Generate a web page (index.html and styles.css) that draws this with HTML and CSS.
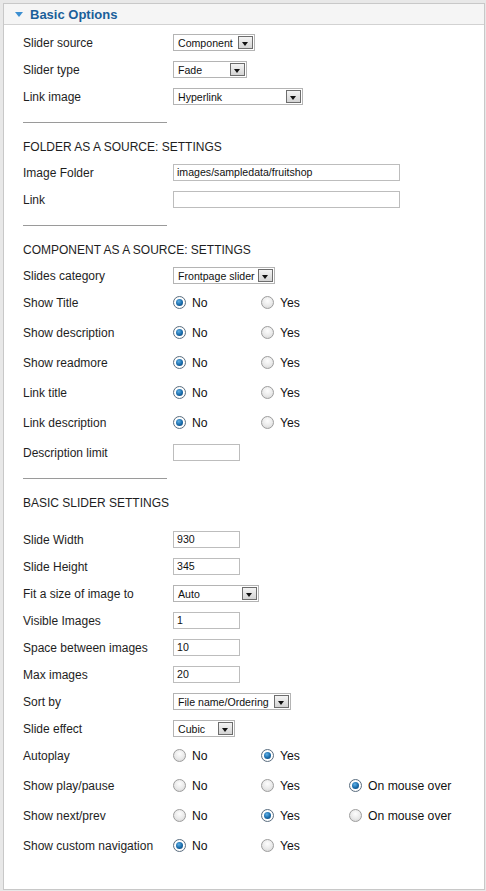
FILE: index.html
```html
<!DOCTYPE html>
<html>
<head>
<meta charset="utf-8">
<link rel="stylesheet" href="styles.css">
</head>
<body>
<div class="panel">
  <div class="panel-head"><span class="tri"></span><span class="title">Basic Options</span></div>
  <div class="panel-body">
    <div class="row"><span class="lbl">Slider source</span><div class="select w82"><span class="val">Component</span><span class="btn"></span></div></div>
    <div class="row"><span class="lbl">Slider type</span><div class="select w74"><span class="val">Fade</span><span class="btn"></span></div></div>
    <div class="row"><span class="lbl">Link image</span><div class="select w130"><span class="val">Hyperlink</span><span class="btn"></span></div></div>
    <div class="sep"><hr></div>
    <div class="heading">FOLDER AS A SOURCE: SETTINGS</div>
    <div class="row"><span class="lbl">Image Folder</span><div class="input wide">images/sampledata/fruitshop</div></div>
    <div class="row"><span class="lbl">Link</span><div class="input wide"></div></div>
    <div class="sep"><hr></div>
    <div class="heading">COMPONENT AS A SOURCE: SETTINGS</div>
    <div class="row"><span class="lbl">Slides category</span><div class="select w102"><span class="val">Frontpage slider</span><span class="btn"></span></div></div>
    <div class="row radio-row"><span class="lbl">Show Title</span><div class="opts"><span class="opt"><span class="radio on"></span>No</span><span class="opt"><span class="radio"></span>Yes</span></div></div>
    <div class="row radio-row"><span class="lbl">Show description</span><div class="opts"><span class="opt"><span class="radio on"></span>No</span><span class="opt"><span class="radio"></span>Yes</span></div></div>
    <div class="row radio-row"><span class="lbl">Show readmore</span><div class="opts"><span class="opt"><span class="radio on"></span>No</span><span class="opt"><span class="radio"></span>Yes</span></div></div>
    <div class="row radio-row"><span class="lbl">Link title</span><div class="opts"><span class="opt"><span class="radio on"></span>No</span><span class="opt"><span class="radio"></span>Yes</span></div></div>
    <div class="row radio-row"><span class="lbl">Link description</span><div class="opts"><span class="opt"><span class="radio on"></span>No</span><span class="opt"><span class="radio"></span>Yes</span></div></div>
    <div class="row"><span class="lbl">Description limit</span><div class="input short"></div></div>
    <div class="sep"><hr></div>
    <div class="heading heading-gap">BASIC SLIDER SETTINGS</div>
    <div class="row"><span class="lbl">Slide Width</span><div class="input short">930</div></div>
    <div class="row"><span class="lbl">Slide Height</span><div class="input short">345</div></div>
    <div class="row"><span class="lbl">Fit a size of image to</span><div class="select w86"><span class="val">Auto</span><span class="btn"></span></div></div>
    <div class="row"><span class="lbl">Visible Images</span><div class="input short">1</div></div>
    <div class="row"><span class="lbl">Space between images</span><div class="input short">10</div></div>
    <div class="row"><span class="lbl">Max images</span><div class="input short">20</div></div>
    <div class="row"><span class="lbl">Sort by</span><div class="select w118"><span class="val">File name/Ordering</span><span class="btn"></span></div></div>
    <div class="row"><span class="lbl">Slide effect</span><div class="select w62"><span class="val">Cubic</span><span class="btn"></span></div></div>
    <div class="row radio-row"><span class="lbl">Autoplay</span><div class="opts"><span class="opt"><span class="radio"></span>No</span><span class="opt"><span class="radio on"></span>Yes</span></div></div>
    <div class="row radio-row"><span class="lbl">Show play/pause</span><div class="opts"><span class="opt"><span class="radio"></span>No</span><span class="opt"><span class="radio"></span>Yes</span><span class="opt"><span class="radio on"></span>On mouse over</span></div></div>
    <div class="row radio-row"><span class="lbl">Show next/prev</span><div class="opts"><span class="opt"><span class="radio"></span>No</span><span class="opt"><span class="radio on"></span>Yes</span><span class="opt"><span class="radio"></span>On mouse over</span></div></div>
    <div class="row radio-row"><span class="lbl">Show custom navigation</span><div class="opts"><span class="opt"><span class="radio on"></span>No</span><span class="opt"><span class="radio"></span>Yes</span></div></div>
  </div>
</div>
</body>
</html>
```
FILE: styles.css
```css
html, body {
  margin: 0;
  padding: 0;
}
body {
  background: #e8e8e8;
  padding: 3px 1px 1px 3px;
  font-family: "Liberation Sans", Arial, sans-serif;
  font-size: 12px;
  color: #1e1e1e;
}
.panel {
  border: 1px solid #c8c8c8;
  background: #fff;
}
.panel-head {
  height: 20px;
  background: #f5f5f5;
  border-bottom: 1px solid #d2d2d2;
  display: flex;
  align-items: center;
  padding-left: 11px;
}
.tri {
  width: 0;
  height: 0;
  border-left: 4px solid transparent;
  border-right: 4px solid transparent;
  border-top: 5px solid #3d8fd1;
  margin-right: 7px;
  margin-top: 1px;
}
.title {
  font-weight: bold;
  font-size: 13px;
  color: #1a5f9a;
}
.panel-body {
  padding: 4px 0 27px 19px;
}
.row {
  height: 27px;
  display: flex;
  align-items: center;
}
.radio-row {
  height: 30px;
  box-sizing: border-box;
  padding-bottom: 3px;
}
.lbl {
  width: 150px;
  flex: none;
}
.sep {
  height: 24px;
  display: flex;
  align-items: center;
}
.sep hr {
  margin: 0;
  border: 0;
  height: 1px;
  width: 144px;
  background: #9a9a9a;
}
.heading {
  height: 25px;
  display: flex;
  align-items: center;
}
.heading-gap {
  margin-bottom: 11px;
}
.select {
  box-sizing: border-box;
  height: 17px;
  border: 1px solid #b4b4b4;
  display: flex;
  align-items: center;
  justify-content: space-between;
  padding: 0 1px 0 4px;
  font-size: 10.6px;
  color: #111;
  background: #fff;
  white-space: nowrap;
}
.w82 { width: 82px; }
.w74 { width: 74px; }
.w130 { width: 130px; }
.w102 { width: 102px; }
.w86 { width: 86px; }
.w118 { width: 118px; }
.w62 { width: 62px; }
.btn {
  position: relative;
  box-sizing: border-box;
  width: 15px;
  height: 13px;
  border: 1px solid #6d6d6d;
  background: linear-gradient(#f4f4f4, #d4d4d4);
  flex: none;
}
.btn::after {
  content: "";
  position: absolute;
  left: 3px;
  bottom: 2px;
  border-left: 3.5px solid transparent;
  border-right: 3.5px solid transparent;
  border-top: 4px solid #111;
}
.input {
  box-sizing: border-box;
  height: 17px;
  border: 1px solid #bdbdbd;
  padding: 0 3px;
  font-size: 10.6px;
  line-height: 15px;
  color: #111;
}
.wide { width: 227px; }
.short { width: 67px; }
.opts {
  display: flex;
}
.opt {
  width: 88px;
  display: flex;
  align-items: center;
  font-size: 12.2px;
  color: #111;
  white-space: nowrap;
}
.opt:last-child {
  width: auto;
}
.radio {
  box-sizing: border-box;
  width: 13px;
  height: 13px;
  border-radius: 50%;
  border: 1px solid #9d9d9d;
  background: radial-gradient(circle at 50% 35%, #fdfdfd 0%, #e9e9e9 55%, #d0d0d0 100%);
  margin-right: 6px;
  position: relative;
  flex: none;
}
.radio.on {
  border-color: #5b6e80;
  background: radial-gradient(circle, #fff 60%, #e2e2e2 100%);
}
.radio.on::after {
  content: "";
  position: absolute;
  left: 2px;
  top: 2px;
  width: 7px;
  height: 7px;
  border-radius: 50%;
  background: radial-gradient(circle at 40% 35%, #5fb0e6 0%, #1769a8 55%, #123e66 100%);
}
```
